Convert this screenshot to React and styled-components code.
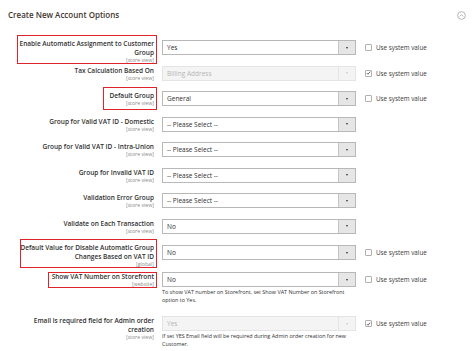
import React from 'react';
import styled, { createGlobalStyle } from 'styled-components';

const Global = createGlobalStyle`
  html, body { margin: 0; padding: 0; background: #fff; }
  body { font-family: "Open Sans", "DejaVu Sans", sans-serif; color: #303030; }
`;

const Page = styled.div`
  width: 474px;
  height: 351px;
  box-sizing: border-box;
  padding: 9px 8px 0 8px;
  overflow: hidden;
`;

const TitleBar = styled.div`
  display: flex;
  align-items: center;
  justify-content: space-between;
  height: 11px;
`;

const Title = styled.h2`
  margin: 0;
  font-size: 8px;
  line-height: 11px;
  font-weight: 600;
  color: #41362f;
`;

const Collapse = styled.svg`
  width: 9px;
  height: 9px;
  margin-top: 1px;
`;

const Fields = styled.div`
  margin-top: 20px;
  display: flex;
  flex-direction: column;
`;

const Row = styled.div`
  display: grid;
  grid-template-columns: 149px 194px auto;
  column-gap: 5px;
  align-items: start;
  height: ${p => (p.$h ? `${p.$h}px` : 'auto')};
  & > :nth-child(3) { margin-left: 4px; }
`;

const LabelCell = styled.div`
  display: flex;
  justify-content: flex-end;
  padding-right: 3px;
  margin-top: ${p => p.$dy || 0}px;
`;

const Label = styled.div`
  position: relative;
  max-width: 140px;
  text-align: right;
`;

const LabelText = styled.div`
  font-size: 6.5px;
  line-height: 9px;
  font-weight: 600;
  color: #303030;
`;

const Scope = styled.div`
  font-size: 5.2px;
  line-height: 6px;
  color: #8a8a8a;
`;

const Highlight = styled.span`
  position: absolute;
  top: ${p => p.$t}px;
  right: ${p => p.$r}px;
  bottom: ${p => p.$b}px;
  left: ${p => p.$l}px;
  border: 1.5px solid #e0232b;
  pointer-events: none;
`;

const Control = styled.div`
  display: flex;
  flex-direction: column;
`;

const Select = styled.div`
  display: flex;
  height: 15px;
  box-sizing: border-box;
  border: 1px solid ${p => (p.$disabled ? '#e4e4e4' : '#b8b8b8')};
  background: ${p => (p.$disabled ? '#f4f4f4' : '#fff')};
`;

const Value = styled.div`
  flex: 1;
  padding-left: 4px;
  font-size: 6.5px;
  line-height: 13px;
  color: ${p => (p.$disabled ? '#b5b5b5' : '#303030')};
`;

const Button = styled.div`
  width: 16px;
  display: flex;
  align-items: center;
  justify-content: center;
  border-left: 1px solid ${p => (p.$disabled ? '#e4e4e4' : '#c4c4c4')};
  background: ${p => (p.$disabled ? '#f4f4f4' : '#e6e6e6')};
`;

const Arrow = styled.span`
  width: 0;
  height: 0;
  border-left: 1.8px solid transparent;
  border-right: 1.8px solid transparent;
  border-top: 2px solid ${p => (p.$disabled ? '#c8c8c8' : '#333')};
`;

const Note = styled.div`
  margin-top: 1px;
  font-size: 5.4px;
  line-height: 8px;
  color: #303030;
`;

const SysValue = styled.label`
  display: flex;
  align-items: center;
  gap: 4px;
  height: 15px;
  font-size: 6.3px;
  color: #3a3a3a;
`;

const Box = styled.span`
  width: 7px;
  height: 7px;
  box-sizing: border-box;
  border: 1px solid #b0b0b0;
  border-radius: 1px;
  background: #fff;
  display: flex;
  align-items: center;
  justify-content: center;
`;

const rows = [
  {
    label: 'Enable Automatic Assignment to Customer Group',
    scope: 'store view', value: 'Yes', sys: false, h: 25.5, dy: -1.5,
    hl: { t: -3.5, r: -3, b: -1, l: 3 },
  },
  { label: 'Tax Calculation Based On', scope: 'store view', value: 'Billing Address', disabled: true, sys: true, h: 25.5 },
  {
    label: 'Default Group', scope: 'store view', value: 'General', sys: false, h: 25.5,
    hl: { t: -4.5, r: -3, b: -3.5, l: -7 },
  },
  { label: 'Group for Valid VAT ID - Domestic', scope: 'store view', value: '-- Please Select --', h: 25.5 },
  { label: 'Group for Valid VAT ID - Intra-Union', scope: 'store view', value: '-- Please Select --', h: 25.5 },
  { label: 'Group for Invalid VAT ID', scope: 'store view', value: '-- Please Select --', h: 25.5 },
  { label: 'Validation Error Group', scope: 'store view', value: '-- Please Select --', h: 25.5 },
  { label: 'Validate on Each Transaction', scope: 'store view', value: 'No', h: 26.5 },
  {
    label: 'Default Value for Disable Automatic Group Changes Based on VAT ID',
    scope: 'global', value: 'No', sys: false, h: 27, dy: -2.5,
    hl: { t: -3.5, r: -3, b: -1.5, l: 6 },
  },
  {
    label: 'Show VAT Number on Storefront', scope: 'website', value: 'No', sys: false, h: 44,
    hl: { t: -0.5, r: -3, b: -0.5, l: -4 },
    note: 'To show VAT number on Storefront, set Show VAT Number on Storefront option to Yes.',
  },
  {
    label: 'Email is required field for Admin order creation', scope: 'store view', value: 'Yes',
    disabled: true, sys: true,
    note: 'If set YES Email field will be required during Admin order creation for new Customer.',
  },
];

function Check() {
  return (
    <svg width="6" height="6" viewBox="0 0 6 6">
      <path d="M1 3.1 L2.4 4.5 L5 1.4" fill="none" stroke="#333" strokeWidth="0.9" />
    </svg>
  );
}

export default function App() {
  return (
    <>
      <Global />
      <Page>
        <TitleBar>
          <Title>Create New Account Options</Title>
          <Collapse viewBox="0 0 10 10">
            <circle cx="5" cy="5" r="4.3" fill="none" stroke="#9a9a9a" strokeWidth="0.8" />
            <path d="M3 6 L5 4 L7 6" fill="none" stroke="#9a9a9a" strokeWidth="0.8" />
          </Collapse>
        </TitleBar>
        <Fields>
          {rows.map((r, i) => (
            <Row key={i} $h={r.h}>
              <LabelCell $dy={r.dy}>
                <Label>
                  <LabelText>{r.label}</LabelText>
                  <Scope>[{r.scope}]</Scope>
                  {r.hl && <Highlight $t={r.hl.t} $r={r.hl.r} $b={r.hl.b} $l={r.hl.l} />}
                </Label>
              </LabelCell>
              <Control>
                <Select $disabled={r.disabled}>
                  <Value $disabled={r.disabled}>{r.value}</Value>
                  <Button $disabled={r.disabled}>
                    <Arrow $disabled={r.disabled} />
                  </Button>
                </Select>
                {r.note && <Note>{r.note}</Note>}
              </Control>
              {r.sys !== undefined ? (
                <SysValue>
                  <Box>{r.sys && <Check />}</Box>
                  Use system value
                </SysValue>
              ) : (
                <span />
              )}
            </Row>
          ))}
        </Fields>
      </Page>
    </>
  );
}
